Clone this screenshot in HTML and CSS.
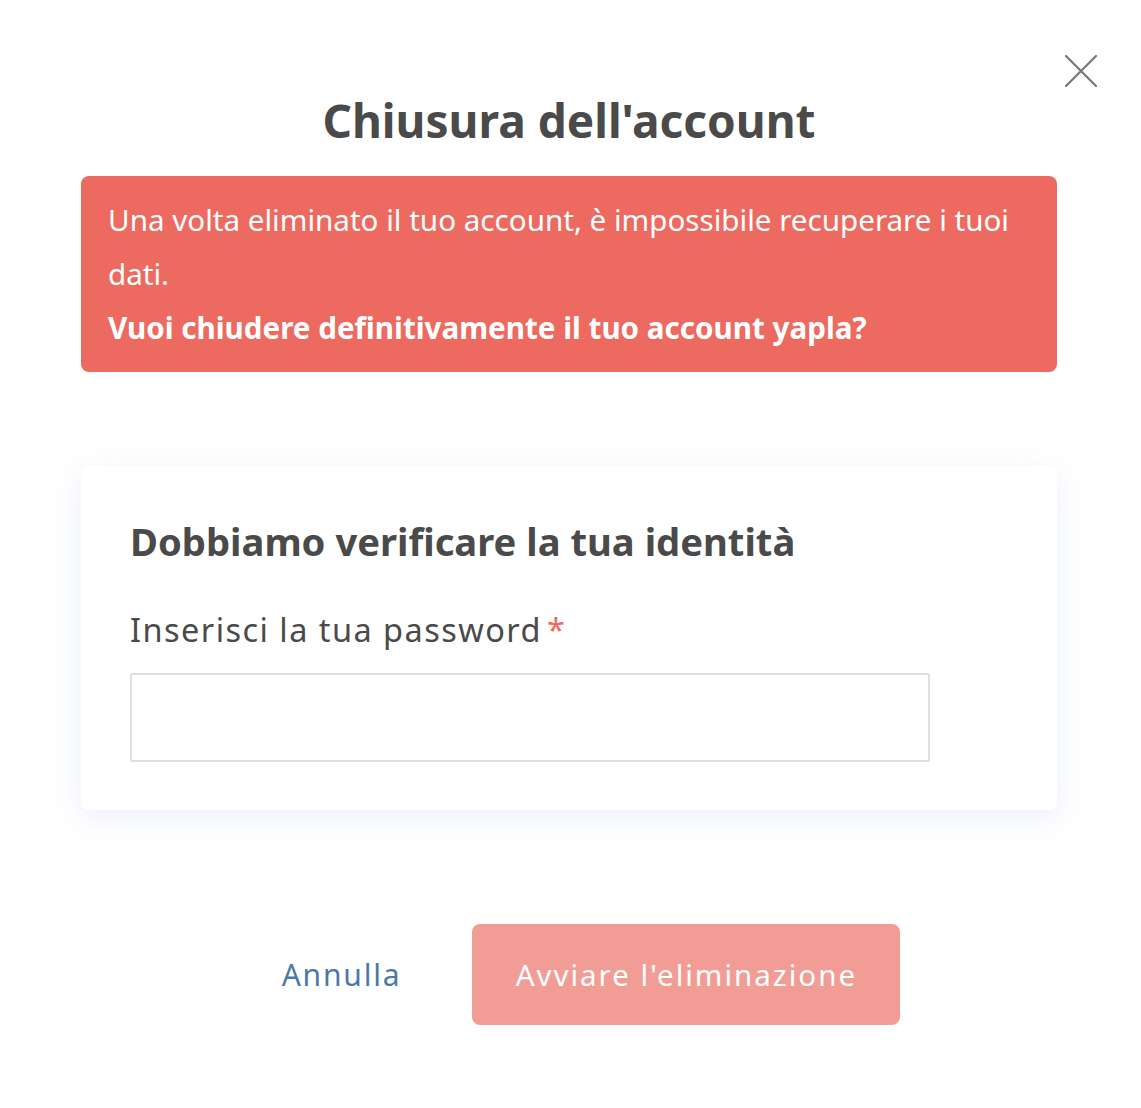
FILE: index.html
```html
<!DOCTYPE html>
<html lang="it">
<head>
<meta charset="utf-8">
<title>Chiusura dell'account</title>
<link rel="stylesheet" href="styles.css">
</head>
<body>
<div class="modal">
  <button class="close" aria-label="Chiudi">
    <svg width="32" height="32" viewBox="0 0 32 32"><path d="M1 1 L31 31 M31 1 L1 31" stroke="#777" stroke-width="2.2" fill="none" stroke-linecap="round"/></svg>
  </button>
  <h1 class="title">Chiusura dell'account</h1>
  <div class="alert">
    <p class="alert-text">Una volta eliminato il tuo account, è impossibile recuperare i tuoi dati.</p>
    <p class="alert-strong">Vuoi chiudere definitivamente il tuo account yapla?</p>
  </div>
  <div class="card">
    <h2 class="card-title">Dobbiamo verificare la tua identità</h2>
    <label class="label" for="pw">Inserisci la tua password<span class="req">*</span></label>
    <input class="input" id="pw" type="password">
  </div>
  <div class="actions">
    <button class="btn-cancel">Annulla</button>
    <button class="btn-delete">Avviare l'eliminazione</button>
  </div>
</div>
</body>
</html>
```
FILE: styles.css
```css
* { box-sizing: border-box; }
html, body { margin: 0; padding: 0; background: #fff; }
body { font-family: "Noto Sans", "Lato", sans-serif; color: #4a4a4a; }

.modal {
  position: relative;
  width: 1141px;
  min-height: 1108px;
  padding: 92px 84px 0 81px;
}
.close {
  position: absolute;
  top: 55px;
  right: 44px;
  width: 32px;
  height: 32px;
  padding: 0;
  border: 0;
  background: none;
  cursor: pointer;
}
.close svg { display: block; }

.title {
  margin: 0;
  text-align: center;
  font-size: 46px;
  font-weight: 700;
  line-height: 56px;
  color: #4a4a4a;
}

.alert {
  margin-top: 28px;
  background: #ec6a60;
  border-radius: 8px;
  padding: 17px 27px;
  color: #fff;
  font-size: 29.6px;
  line-height: 54px;
}
.alert p { margin: 0; }
.alert-strong { font-weight: 700; }

.card {
  margin-top: 94px;
  background: #fff;
  border-radius: 8px;
  box-shadow: 0 8px 30px rgba(110, 130, 220, 0.13);
  padding: 48px 49px 48px 49px;
}
.card-title {
  margin: 0;
  font-size: 38.2px;
  font-weight: 700;
  line-height: 54px;
  color: #4a4a4a;
}
.label {
  display: block;
  margin-top: 40px;
  font-size: 32.5px;
  line-height: 44px;
  letter-spacing: 1.45px;
  color: #4a4a4a;
}
.req { color: #ec6a60; margin-left: 5px; }
.input {
  display: block;
  margin-top: 21px;
  width: 800px;
  height: 89px;
  border: 2px solid #dcdfe3;
  border-radius: 2px;
  background: #fff;
  font: inherit;
}

.actions {
  margin-top: 114px;
  display: flex;
  justify-content: center;
  align-items: center;
  gap: 71px;
  padding-left: 44px;
}
.btn-cancel {
  border: 0;
  background: none;
  padding: 0;
  font-family: inherit;
  font-size: 30px;
  letter-spacing: 1.8px;
  color: #4a78ad;
  cursor: pointer;
}
.btn-delete {
  width: 428px;
  height: 101px;
  border: 0;
  border-radius: 8px;
  background: #f19d96;
  color: #fff;
  font-family: inherit;
  font-size: 29.5px;
  letter-spacing: 2px;
  cursor: pointer;
}
```
